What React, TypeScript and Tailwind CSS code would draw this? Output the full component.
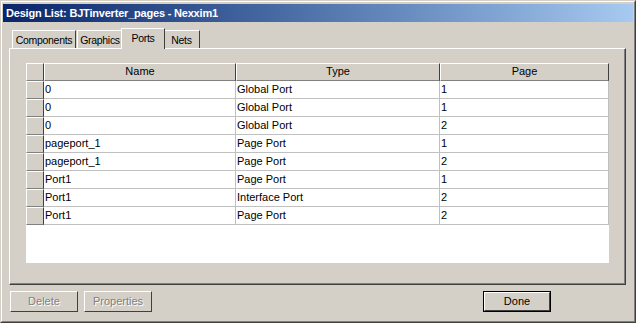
import React from 'react';

const rows = [
  { name: '0', type: 'Global Port', page: '1' },
  { name: '0', type: 'Global Port', page: '1' },
  { name: '0', type: 'Global Port', page: '2' },
  { name: 'pageport_1', type: 'Page Port', page: '1' },
  { name: 'pageport_1', type: 'Page Port', page: '2' },
  { name: 'Port1', type: 'Page Port', page: '1' },
  { name: 'Port1', type: 'Interface Port', page: '2' },
  { name: 'Port1', type: 'Page Port', page: '2' },
];

const App: React.FC = () => {
  return (
    <div
      className="w-[636px] h-[323px] bg-[#d4d0c8] border border-t-[#d4d0c8] border-l-[#d4d0c8] border-r-[#404040] border-b-[#404040] text-[11px] text-black overflow-hidden"
      style={{ fontFamily: 'Tahoma, "Liberation Sans", Arial, sans-serif' }}
    >
      <div className="h-full border border-t-white border-l-white border-r-[#808080] border-b-[#808080] px-[1px] pt-[1px] flex flex-col">
        {/* Title bar */}
        <div className="mt-[1px] h-[18px] bg-gradient-to-r from-[#0a246a] to-[#a6caf0] text-white font-bold text-[11px] leading-[18px] pl-[3px] tracking-[-0.2px]">
          Design List: BJTinverter_pages - Nexxim1
        </div>

        {/* Tabs */}
        <div className="flex items-end h-[26px] pl-[9px] text-[10.5px] tracking-[-0.3px]">
          <div className="w-[64px] h-[18px] pt-[3px] text-center bg-[#d4d0c8] border-t border-l border-white border-r border-r-[#404040] leading-[13px]">
            Components
          </div>
          <div className="ml-[1px] w-[46px] h-[18px] pt-[3px] text-center bg-[#d4d0c8] border-t border-l border-white border-r border-r-[#404040] leading-[13px]">
            Graphics
          </div>
          <div className="relative z-10 -mb-[1px] -mx-[2px] w-[44px] h-[21px] pt-[2px] text-center bg-[#d4d0c8] border-t border-l border-white border-r border-r-[#404040] leading-[14px]">
            Ports
          </div>
          <div className="w-[37px] h-[18px] pt-[3px] text-center bg-[#d4d0c8] border-t border-l border-white border-r border-r-[#404040] leading-[13px]">
            Nets
          </div>
        </div>

        {/* Panel */}
        <div className="ml-[6px] w-[617px] h-[237px] border border-t-white border-l-white border-r-[#404040] border-b-[#404040]">
          <div className="h-full border-r border-b border-r-[#808080] border-b-[#808080] pl-[16px] pt-[14px]">
            <div className="w-[583px] h-[200px] bg-white">
              {/* Header */}
              <div className="flex h-[18px]">
                <div className="w-[18px] bg-[#d4d0c8] border-t border-l border-white border-r border-b border-r-[#404040] border-b-[#808080]" />
                <div className="w-[192px] bg-[#d4d0c8] border-t border-l border-white border-r border-b border-r-[#404040] border-b-[#808080] text-center leading-[15px]">
                  Name
                </div>
                <div className="w-[204px] bg-[#d4d0c8] border-t border-l border-white border-r border-b border-r-[#404040] border-b-[#808080] text-center leading-[15px]">
                  Type
                </div>
                <div className="w-[169px] bg-[#d4d0c8] border-t border-l border-white border-r border-b border-r-[#404040] border-b-[#808080] text-center leading-[15px]">
                  Page
                </div>
              </div>
              {rows.map((r, i) => (
                <div key={i} className="flex h-[18px]">
                  <div className="w-[18px] bg-[#d4d0c8] border-t border-l border-white border-r border-b border-r-[#404040] border-b-[#808080]" />
                  <div className="w-[192px] border-r border-b border-[#c0c0c0] pl-[1px] leading-[17px]">{r.name}</div>
                  <div className="w-[204px] border-r border-b border-[#c0c0c0] pl-[1px] leading-[17px]">{r.type}</div>
                  <div className="w-[169px] border-r border-b border-[#c0c0c0] pl-[1px] leading-[17px]">{r.page}</div>
                </div>
              ))}
            </div>
          </div>
        </div>

        {/* Buttons */}
        <div className="flex items-start pl-[7px] pt-[6px]">
          <button className="w-[68px] h-[21px] bg-[#d4d0c8] border border-t-white border-l-white border-r-[#404040] border-b-[#404040] text-[#808080] [text-shadow:1px_1px_0_#fff]">
            Delete
          </button>
          <button className="ml-[6px] w-[68px] h-[21px] bg-[#d4d0c8] border border-t-white border-l-white border-r-[#404040] border-b-[#404040] text-[#808080] [text-shadow:1px_1px_0_#fff]">
            Properties
          </button>
          <button className="ml-[331px] w-[68px] h-[21px] bg-[#d4d0c8] border border-black">
            <div className="h-full border border-t-white border-l-white border-r-[#404040] border-b-[#404040] leading-[17px]">
              Done
            </div>
          </button>
        </div>
      </div>
    </div>
  );
};

export default App;
